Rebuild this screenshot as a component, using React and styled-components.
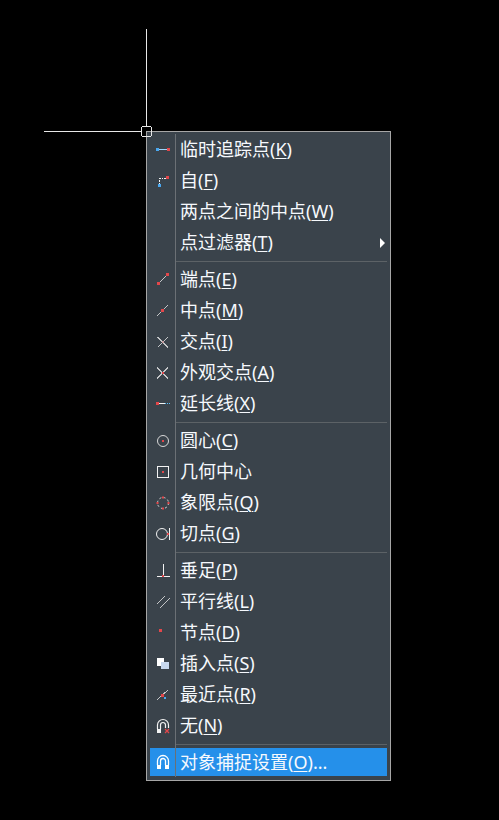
import React from 'react';
import styled, { createGlobalStyle } from 'styled-components';

const Global = createGlobalStyle`
  html, body { margin: 0; padding: 0; background: #000; overflow: hidden; }
  body { width: 499px; height: 820px; }
`;

const Stage = styled.div`
  position: relative;
  width: 499px;
  height: 820px;
  box-sizing: border-box;
  padding: 131px 0 0 146px;
  background: #000;
`;

const Crosshair = styled.svg`
  position: absolute;
  left: 40px;
  top: 25px;
  width: 115px;
  height: 115px;
  z-index: 2;
`;

const Menu = styled.div`
  width: 245px;
  box-sizing: border-box;
  display: flex;
  flex-direction: column;
  padding: 2px 3px 3px;
  background: #3a434b;
  border: 1px solid #a6a6a6;
  font-family: "Noto Sans", "Noto Sans CJK SC", sans-serif;
  font-size: 18px;
  color: #f6f9fd;
`;

const Row = styled.div`
  display: flex;
  align-items: stretch;
  height: ${p => (p.$active ? 30 : 31)}px;
  box-sizing: border-box;
  ${p => p.$active && `
    padding: 1px 0;
    background: #2590ea;
    background-clip: content-box;
  `}
`;

const Gutter = styled.div`
  width: 26px;
  flex: none;
  display: flex;
  align-items: center;
  padding-left: 5px;
  box-sizing: border-box;
  border-right: 1px solid #6b7075;
  ${p => p.$active && `margin: -1px 0;`}
`;

const Label = styled.div`
  flex: 1;
  display: flex;
  align-items: center;
  justify-content: space-between;
  padding: 0 2px 1px 4px;
  line-height: 1;
  white-space: nowrap;
  u { text-underline-offset: 2px; text-decoration-thickness: 1px; }
`;

const Arrow = styled.span`
  width: 0;
  height: 0;
  margin-top: 1px;
  border-style: solid;
  border-width: 5px 0 5px 5px;
  border-color: transparent transparent transparent #fff;
`;

const Divider = styled.div`
  display: flex;
  height: 6px;
`;

const DividerLine = styled.div`
  flex: 1;
  height: 1px;
  margin-top: 3px;
  background: #5c6266;
`;

const Icon = styled.svg`
  width: 16px;
  height: 16px;
  display: block;
  flex: none;
`;

const R = '#e2474b';
const B = '#4aa8f0';
const W = '#f2f2f2';
const G = '#c4c6c8';

const Sq = ({ x, y, s = 3, c = R }) => <rect x={x} y={y} width={s} height={s} fill={c} />;

const icons = {
  track: <><path d="M4 7.5H12" stroke="#9fd4fa" /><Sq x={1} y={6} c={B} /><Sq x={12} y={6} /></>,
  from: <><path d="M4.5 11V5.5H11" stroke={W} strokeDasharray="1.5 1" fill="none" /><Sq x={11} y={3} /><Sq x={3} y={11} c={B} /></>,
  end: <><path d="M4 11L12 3" stroke={G} /><Sq x={11} y={1} /><Sq x={2} y={10} /></>,
  mid: <><path d="M2 13L13 2" stroke={G} /><Sq x={6} y={6} /></>,
  cross: <><path d="M2.5 3L13 13.5M13 3L2.5 13.5" stroke={G} /><Sq x={7} y={7} s={2} c="#c9a0a2" /></>,
  apparent: <><path d="M2 2.5L13 13.5M13 2.5L2 13.5" stroke={G} /><Sq x={6.5} y={7} s={2} /></>,
  ext: <><path d="M4 7.5H10" stroke={W} /><path d="M10 7.5H16" stroke="#5cc0fa" strokeDasharray="1 1" /><Sq x={1} y={6} /></>,
  center: <><circle cx="8" cy="8" r="5.5" stroke="#d8d8d8" fill="none" /><Sq x={7} y={7} s={2} /></>,
  geo: <><rect x="2.5" y="2.5" width="11" height="11" stroke={W} fill="none" /><Sq x={7} y={7} s={2} /></>,
  quad: <><circle cx="8" cy="8" r="5.5" stroke="#d8d8d8" strokeDasharray="2 2.3" fill="none" /><Sq x={1.5} y={7} s={2} /><Sq x={12.5} y={7} s={2} /><Sq x={7} y={1.5} s={2} /><Sq x={7} y={12.5} s={2} /></>,
  tan: <><circle cx="7" cy="8" r="5.5" stroke={W} fill="none" /><path d="M14.5 2V14" stroke={W} /><Sq x={12} y={7} s={2} /></>,
  perp: <><path d="M8.5 1V13M2 13.5H15" stroke={W} /><Sq x={7} y={12} s={2} /></>,
  par: <><path d="M2 10L10 2M5 14L15 4" stroke={G} /></>,
  node: <Sq x={4} y={4} />,
  insert: <><rect x="2" y="2" width="7" height="8" fill="#fff" /><rect x="6" y="6" width="8" height="7" fill="#c7d8ee" /></>,
  near: <><path d="M2 13L13 3" stroke={G} /><Sq x={6} y={7} /><Sq x={9} y={10} s={2} c={B} /></>,
  none: <><path d="M2.5 11V7A5.5 5.5 0 0 1 13.5 7V10M5.5 11V7A2.5 2.5 0 0 1 10.5 7V10" stroke={W} strokeWidth="1.2" fill="none" /><path d="M2 11H6V15H2Z" fill={W} /><path d="M10 11L14 15M14 11L10 15" stroke={R} strokeWidth="1.2" /></>,
  magnet: <><path d="M2.5 11V7A5.5 5.5 0 0 1 13.5 7V11M5.5 11V7A2.5 2.5 0 0 1 10.5 7V11" stroke="#fff" strokeWidth="1.3" fill="none" /><path d="M2 11H6V15H2ZM10 11H14V15H10Z" fill="#fff" /></>,
};

const groups = [
  [
    ['track', '临时追踪点', 'K'],
    ['from', '自', 'F'],
    [null, '两点之间的中点', 'W'],
    [null, '点过滤器', 'T', true],
  ],
  [
    ['end', '端点', 'E'],
    ['mid', '中点', 'M'],
    ['cross', '交点', 'I'],
    ['apparent', '外观交点', 'A'],
    ['ext', '延长线', 'X'],
  ],
  [
    ['center', '圆心', 'C'],
    ['geo', '几何中心'],
    ['quad', '象限点', 'Q'],
    ['tan', '切点', 'G'],
  ],
  [
    ['perp', '垂足', 'P'],
    ['par', '平行线', 'L'],
    ['node', '节点', 'D'],
    ['insert', '插入点', 'S'],
    ['near', '最近点', 'R'],
    ['none', '无', 'N'],
  ],
];

const curved = ['center', 'quad', 'tan', 'none', 'magnet'];

const Item = ({ icon, text, hot, arrow, active, tail }) => (
  <Row $active={active}>
    <Gutter $active={active}>
      {icon && <Icon viewBox="0 0 16 16" shapeRendering={curved.includes(icon) ? 'auto' : 'crispEdges'}>{icons[icon]}</Icon>}
    </Gutter>
    <Label>
      <span>{text}{hot && <>(<u>{hot}</u>)</>}{tail}</span>
      {arrow && <Arrow />}
    </Label>
  </Row>
);

const Sep = () => (
  <Divider>
    <Gutter />
    <DividerLine />
  </Divider>
);

export default function App() {
  return (
    <Stage>
      <Global />
      <Crosshair viewBox="0 0 115 115" shapeRendering="crispEdges">
        <path d="M106.5 4V101M4 106.5H101" stroke="#e8e8e8" fill="none" />
        <rect x="101.5" y="101.5" width="10" height="10" rx="2" stroke="#e8e8e8" fill="none" />
      </Crosshair>
      <Menu>
        {groups.map((g, i) => (
          <React.Fragment key={i}>
            {g.map(([icon, text, hot, arrow]) => (
              <Item key={text} icon={icon} text={text} hot={hot} arrow={arrow} />
            ))}
            <Sep />
          </React.Fragment>
        ))}
        <Item icon="magnet" text="对象捕捉设置" hot="O" tail="..." active />
      </Menu>
    </Stage>
  );
}
